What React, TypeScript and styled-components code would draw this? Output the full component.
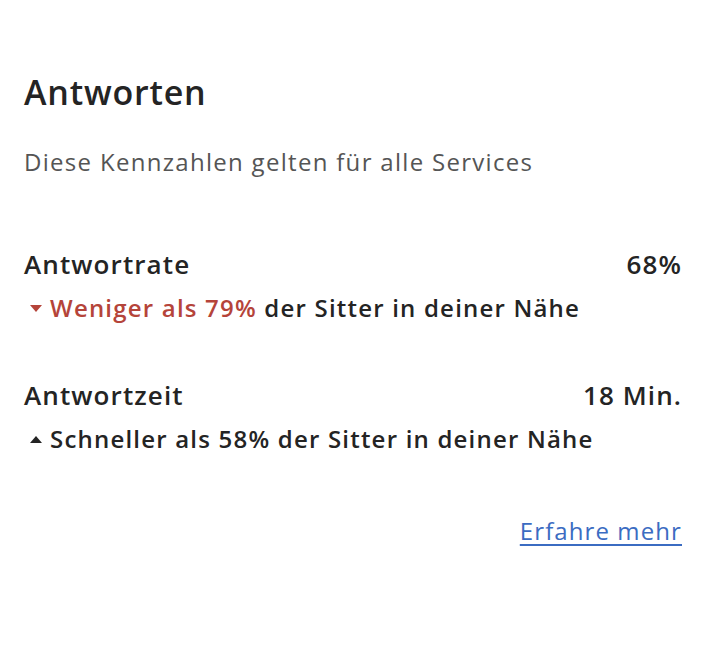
import React from 'react';
import styled, { createGlobalStyle } from 'styled-components';

const GlobalStyle = createGlobalStyle`
  html, body {
    margin: 0;
    padding: 0;
    background: #ffffff;
  }
  body {
    font-family: 'Open Sans', 'Noto Sans', sans-serif;
    color: #242424;
  }
`;

const Card = styled.div`
  display: flex;
  flex-direction: column;
  padding: 66px 30px 0 24px;
`;

const Title = styled.h1`
  margin: 0;
  font-size: 34px;
  line-height: 52px;
  font-weight: 600;
  letter-spacing: 0.8px;
  color: #242424;
`;

const Subtitle = styled.p`
  margin: 27px 0 0;
  font-size: 24px;
  line-height: 34px;
  letter-spacing: 1.3px;
  color: #555555;
`;

const Metric = styled.div<{ $first?: boolean }>`
  display: flex;
  flex-direction: column;
  margin-top: ${(p) => (p.$first ? '66px' : '51px')};
`;

const MetricHead = styled.div`
  display: flex;
  justify-content: space-between;
  align-items: baseline;
  font-size: 26px;
  line-height: 38px;
  font-weight: 600;
  letter-spacing: 1.1px;
`;

const Compare = styled.div`
  display: flex;
  align-items: center;
  margin-top: 8px;
  font-size: 24px;
  line-height: 34px;
  font-weight: 600;
  letter-spacing: 1.2px;
  color: #242424;
`;

const Arrow = styled.span<{ $down?: boolean }>`
  display: inline-block;
  width: 0;
  height: 0;
  margin: 0 8px 0 6px;
  border-left: 6px solid transparent;
  border-right: 6px solid transparent;
  ${(p) =>
    p.$down
      ? 'border-top: 7px solid #b5443a;'
      : 'border-bottom: 7px solid #242424;'}
`;

const Red = styled.span`
  color: #b5443a;
  white-space: pre;
`;

const Footer = styled.div`
  display: flex;
  justify-content: flex-end;
  margin-top: 58px;
`;

const Link = styled.a`
  font-size: 24px;
  line-height: 34px;
  letter-spacing: 1.1px;
  color: #3b6cc2;
  text-decoration: underline;
  text-underline-offset: 4px;
  text-decoration-thickness: 1.5px;
  cursor: pointer;
`;

export default function App() {
  return (
    <>
      <GlobalStyle />
      <Card>
        <Title>Antworten</Title>
        <Subtitle>Diese Kennzahlen gelten für alle Services</Subtitle>

        <Metric $first>
          <MetricHead>
            <span>Antwortrate</span>
            <span>68%</span>
          </MetricHead>
          <Compare>
            <Arrow $down />
            <Red>Weniger als 79% </Red>
            der Sitter in deiner Nähe
          </Compare>
        </Metric>

        <Metric>
          <MetricHead>
            <span>Antwortzeit</span>
            <span>18 Min.</span>
          </MetricHead>
          <Compare>
            <Arrow />
            Schneller als 58% der Sitter in deiner Nähe
          </Compare>
        </Metric>

        <Footer>
          <Link>Erfahre mehr</Link>
        </Footer>
      </Card>
    </>
  );
}
